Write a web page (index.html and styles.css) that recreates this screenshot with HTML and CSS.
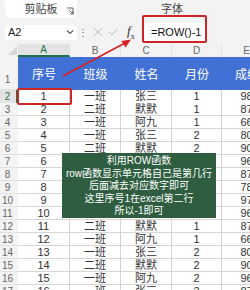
FILE: index.html
```html
<!DOCTYPE html>
<html lang="zh">
<head>
<meta charset="utf-8">
<link rel="stylesheet" href="styles.css">
</head>
<body>
<div class="app">
  <div class="ribbon">
    <div class="group clip">
      <span class="group-label">剪贴板</span>
      <svg class="launcher" width="8" height="8" viewBox="0 0 8 8"><path d="M1 1h6v6M3 3l4 4M4 7h3V4" fill="none" stroke="#666" stroke-width="1"/></svg>
    </div>
    <div class="group font"><span class="group-label">字体</span></div>
  </div>
  <div class="formula-bar">
    <div class="name-box"><span>A2</span>
      <svg width="8" height="6" viewBox="0 0 8 6"><path d="M1 1.5l3 3 3-3" fill="none" stroke="#555" stroke-width="1.1"/></svg>
    </div>
    <span class="dots">⋮</span>
    <svg class="fb-icon x" width="10" height="10" viewBox="0 0 10 10"><path d="M1 1l8 8M9 1l-8 8" stroke="#bbb" stroke-width="1"/></svg>
    <svg class="fb-icon" width="10" height="10" viewBox="0 0 10 10"><path d="M1 5l3 3 5-6" fill="none" stroke="#bbb" stroke-width="1"/></svg>
    <span class="fx"><i>f</i><sub>x</sub></span>
    <div class="formula-input">=ROW()-1</div>
  </div>
  <div class="sheet">
    <div class="corner"><span class="tri"></span></div>
    <div class="col-h sel">A</div>
    <div class="col-h">B</div>
    <div class="col-h">C</div>
    <div class="col-h">D</div>
    <div class="col-h">E</div>

    <div class="row-h r1">1</div>
    <div class="hd r1">序号</div><div class="hd r1">班级</div><div class="hd r1">姓名</div><div class="hd r1">月份</div><div class="hd r1">成绩</div>
  </div>
  <div class="sheet body" id="rows"></div>
  <div class="sel-box"></div>
  <div class="formula-box"></div>
  <svg class="arrow" width="250" height="290" viewBox="0 0 250 290">
    <line x1="63" y1="76" x2="125" y2="43" stroke="#d42222" stroke-width="1.6"/>
    <path d="M131 39.5 L121.5 41 L125.5 47.5 Z" fill="#d42222"/>
  </svg>
  <div class="tip">利用ROW函数<br>row函数显示单元格自己是第几行<br>后面减去对应数字即可<br>这里序号1在excel第二行<br>所以-1即可</div>
</div>
<script src="script.js"></script>
</body>
</html>
```
FILE: script.js
```js
const data = [
  [1,"一班","张三",1,98],[2,"二班","默默",1,87],[3,"一班","阿九",1,66],[4,"一班","张三",2,80],
  [5,"二班","默默",2,90],[6,"一班","阿九",2,96],[7,"二班","张三",3,87],[8,"一班","默默",3,78],
  [9,"一班","阿九",3,97],[10,"二班","张三",4,96],[11,"二班","默默",1,87],[12,"一班","阿九",1,66],
  [13,"一班","张三",2,80],[14,"二班","默默",2,90],[15,"一班","阿九",2,96],[16,"一班","张三",3,87]
];
const rows = document.getElementById("rows");
data.forEach((r, i) => {
  const n = i + 2;
  const h = document.createElement("div");
  h.className = "row-h" + (n === 2 ? " sel" : "");
  h.textContent = n;
  rows.appendChild(h);
  r.forEach(v => {
    const c = document.createElement("div");
    c.className = "cell" + (n === 2 ? " r2" : "");
    c.textContent = v;
    rows.appendChild(c);
  });
});
```
FILE: styles.css
```css
* { box-sizing: border-box; }
html, body { margin: 0; padding: 0; }
body {
  width: 250px; height: 290px; overflow: hidden;
  background: #f3f3f3;
  font-family: "Liberation Sans", "Noto Sans CJK SC", sans-serif;
  color: #333;
}
.app { position: relative; width: 250px; height: 290px; overflow: hidden; }
.ribbon { display: flex; height: 21px; }
.group { display: flex; align-items: flex-end; height: 18px; font-size: 11px; color: #444; }
.clip {
  width: 72px; margin-left: 5px; background: #fff;
  border-radius: 0 0 6px 6px; justify-content: center; padding-bottom: 2px; position: relative;
}
.launcher { position: absolute; right: 3px; bottom: 3px; }
.font { margin-left: 84px; padding-bottom: 2px; }
.formula-bar { display: flex; align-items: center; height: 22px; padding-left: 5px; }
.name-box {
  width: 72px; height: 15px; background: #fff; border-radius: 3px;
  display: flex; align-items: center; justify-content: space-between;
  padding: 0 3px 0 3px; font-size: 11px; color: #222;
}
.dots { width: 12px; text-align: center; font-size: 10px; color: #666; }
.fb-icon { margin-left: 5px; }
.fb-icon.x { margin-left: 4px; }
.fx { margin-left: 9px; font-family: "Liberation Serif", serif; font-size: 13px; color: #333; width: 10px; }
.fx sub { font-size: 8px; }
.formula-input {
  margin-left: 5px; width: 63px; height: 18px; background: #fff;
  font-size: 11px; color: #111; padding-left: 9px; line-height: 18px; white-space: nowrap;
}
.sheet {
  display: grid;
  grid-template-columns: 18px 52px 51px 51px 50px 50px;
  margin-top: 1px;
}
.sheet.body { margin-top: 0; grid-auto-rows: 13px; }
.sheet.body > :nth-child(-n+6) { height: 14px; }
.corner { height: 13px; position: relative; background: #f3f3f3; }
.tri {
  position: absolute; right: 1px; bottom: 2px; width: 0; height: 0;
  border-left: 9px solid transparent; border-bottom: 9px solid #d9d9d9;
}
.col-h {
  height: 13px; font-size: 10px; color: #666; text-align: center; line-height: 13px;
  background: #f3f3f3; border-right: 1px solid #e2e2e2;
}
.col-h.sel { background: #e3e3e3; color: #1e7145; border-bottom: 2px solid #1e7145; line-height: 12px; }
.row-h {
  font-size: 10px; color: #666; text-align: center; background: #f3f3f3;
  border-bottom: 1px solid #e2e2e2; padding-right: 3px; line-height: 13px;
}
.row-h.r1 { height: 33px; line-height: 46px; }
.row-h.sel { color: #1e7145; background: #e3e3e3; border-right: 2px solid #1e7145; padding-right: 1px; line-height: 14px; }
.hd {
  height: 33px; background: #4271d6; color: #fff; font-size: 12px;
  display: flex; align-items: center; justify-content: center;
}
.cell {
  background: #fff; font-size: 11px; color: #333; text-align: center; line-height: 12px;
  border-right: 1px solid #d6d6d6; border-bottom: 1px solid #d6d6d6; white-space: nowrap;
}
.cell.r2 { line-height: 13px; }
.sel-box {
  position: absolute; left: 17px; top: 88px; width: 55px; height: 17px;
  border: 2px solid #cc2525; border-radius: 2px;
}
.formula-box {
  position: absolute; left: 142px; top: 15px; width: 65px; height: 28px;
  border: 2px solid #cc2525; border-radius: 2px;
}
.arrow { position: absolute; left: 0; top: 0; pointer-events: none; }
.tip {
  position: absolute; left: 62px; top: 153px; width: 154px; height: 65px;
  background: #2e5d3f; color: #fff; font-size: 10px; line-height: 12.5px;
  text-align: center; padding-top: 2px; white-space: nowrap;
}
```
